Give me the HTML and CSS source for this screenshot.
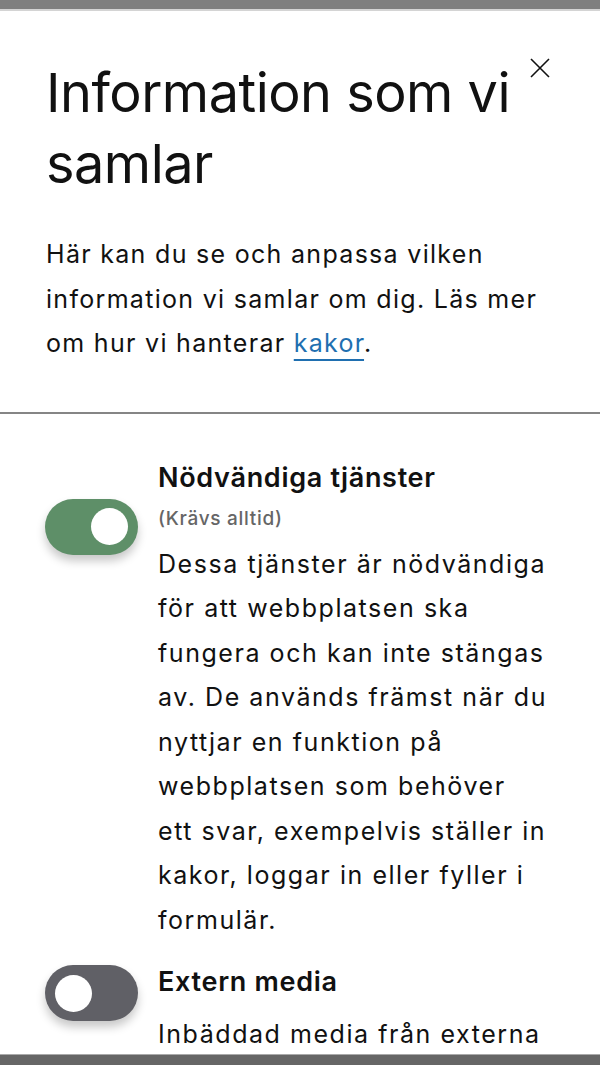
FILE: index.html
```html
<!DOCTYPE html>
<html lang="sv">

<head>
    <meta charset="UTF-8">
    <meta name="viewport" content="width=device-width, initial-scale=1.0">
    <title>Information som vi samlar</title>
    <link rel="stylesheet" href="styles.css">
</head>

<body>
    <div class="topbar"></div>
    <div class="dialog">
        <div class="head">
            <button class="close" aria-label="Stäng">
                <svg width="20" height="20" viewBox="0 0 20 20"><path d="M1 1 L19 19 M19 1 L1 19" stroke="#111" stroke-width="1.6" fill="none"/></svg>
            </button>
            <h1>Information som vi samlar</h1>
            <p class="intro">Här kan du se och anpassa vilken information vi samlar om dig. Läs mer om hur vi hanterar <a href="#">kakor</a>.</p>
        </div>
        <div class="services">
            <div class="service">
                <div class="switch on first"><span class="knob"></span></div>
                <div class="info">
                    <h2>Nödvändiga tjänster</h2>
                    <div class="note">(Krävs alltid)</div>
                    <p>Dessa tjänster är nödvändiga för att webbplatsen ska fungera och kan inte stängas av. De används främst när du nyttjar en funktion på webbplatsen som behöver ett svar, exempelvis ställer in kakor, loggar in eller fyller i formulär.</p>
                </div>
            </div>
            <div class="service">
                <div class="switch"><span class="knob"></span></div>
                <div class="info">
                    <h2>Extern media</h2>
                    <p>Inbäddad media från externa plattformar som till exempel videor och kartor.</p>
                </div>
            </div>
        </div>
    </div>
    <div class="bottombar"></div>
</body>

</html>
```

FILE: styles.css
```css
body {
    margin: 0;
    background: #fff;
    font-family: Inter, "Liberation Sans", sans-serif;
    color: #111;
}
.topbar {
    height: 9px;
    background: #7f7f7f;
    border-bottom: 2px solid #d4d4d4;
}
.head {
    position: relative;
    padding: 46px 46px 46px 46px;
    border-bottom: 2px solid #858585;
}
.close {
    position: absolute;
    top: 47px;
    right: 50px;
    background: none;
    border: 0;
    padding: 0;
    line-height: 0;
}
h1 {
    margin: 0;
    font-size: 54px;
    font-weight: 400;
    line-height: 71px;
    letter-spacing: -0.5px;
}
.intro {
    margin: 33px 0 0 0;
    font-size: 25px;
    line-height: 44.5px;
    letter-spacing: 1.3px;
}
.intro a {
    color: #1f6fb0;
    text-decoration: underline;
    text-decoration-thickness: 2px;
    text-underline-offset: 7px;
}
.services {
    padding: 44px 0 0 45px;
}
.service {
    display: flex;
    align-items: flex-start;
    gap: 20px;
    margin-bottom: 20px;
}
.switch {
    flex: none;
    width: 93px;
    height: 56px;
    margin-top: 3px;
    border-radius: 28px;
    background: #606066;
    box-shadow: 0 6px 10px rgba(0, 0, 0, 0.22);
    display: flex;
    align-items: center;
    padding: 0 10px;
    box-sizing: border-box;
}
.switch.on {
    background: #5e8f68;
    justify-content: flex-end;
}
.switch.first {
    margin-top: 41px;
}
.knob {
    width: 37px;
    height: 37px;
    border-radius: 50%;
    background: #fff;
}
.info {
    width: 389px;
}
h2 {
    margin: 0;
    font-size: 27px;
    font-weight: 600;
    line-height: 40px;
    letter-spacing: 0.7px;
}
.note {
    margin: 8px 0 6px 0;
    font-size: 19px;
    font-weight: 500;
    line-height: 26px;
    letter-spacing: 0.7px;
    color: #666;
}
.info p {
    margin: 10px 0 0 0;
    font-size: 25px;
    line-height: 44.5px;
    letter-spacing: 1.55px;
}
.bottombar {
    position: fixed;
    left: 0;
    right: 0;
    bottom: 0;
    height: 10px;
    background: #666;
    border-top: 1px solid #aaa;
}
```
